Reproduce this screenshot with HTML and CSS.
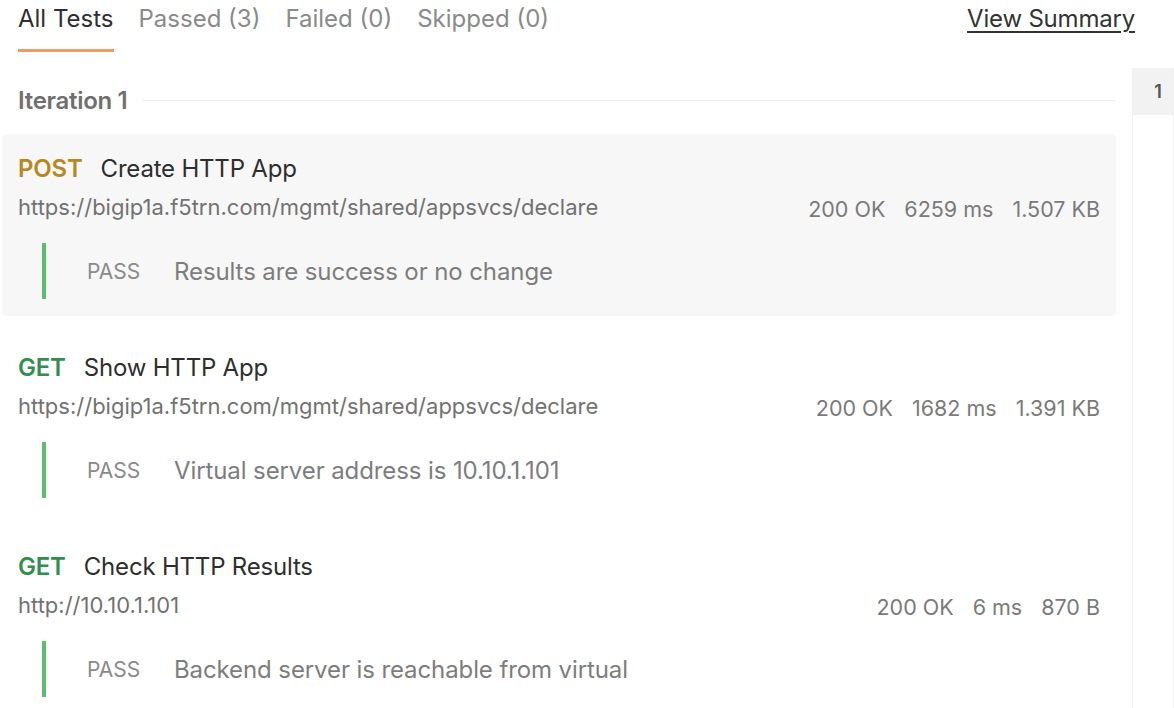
FILE: index.html
```html
<!DOCTYPE html>
<html>
<head>
<meta charset="utf-8">
<link rel="stylesheet" href="styles.css">
</head>
<body>
<div class="page">
  <div class="tabs">
    <div class="tab active">All Tests</div>
    <div class="tab">Passed (3)</div>
    <div class="tab">Failed (0)</div>
    <div class="tab">Skipped (0)</div>
    <a class="summary">View Summary</a>
  </div>
  <div class="content">
    <div class="main">
      <div class="iteration">
        <span class="iter-label">Iteration 1</span>
        <span class="iter-line"></span>
      </div>
      <div class="req hovered">
        <div class="req-top">
          <div class="req-info">
            <div class="req-title"><span class="method post">POST</span><span class="name">Create HTTP App</span></div>
            <div class="url">https://bigip1a.f5trn.com/mgmt/shared/appsvcs/declare</div>
          </div>
          <div class="stats"><span>200 OK</span><span>6259 ms</span><span>1.507 KB</span></div>
        </div>
        <div class="test"><span class="pass">PASS</span><span class="test-name">Results are success or no change</span></div>
      </div>
      <div class="req">
        <div class="req-top">
          <div class="req-info">
            <div class="req-title"><span class="method get">GET</span><span class="name">Show HTTP App</span></div>
            <div class="url">https://bigip1a.f5trn.com/mgmt/shared/appsvcs/declare</div>
          </div>
          <div class="stats"><span>200 OK</span><span>1682 ms</span><span>1.391 KB</span></div>
        </div>
        <div class="test"><span class="pass">PASS</span><span class="test-name">Virtual server address is 10.10.1.101</span></div>
      </div>
      <div class="req">
        <div class="req-top">
          <div class="req-info">
            <div class="req-title"><span class="method get">GET</span><span class="name">Check HTTP Results</span></div>
            <div class="url">http://10.10.1.101</div>
          </div>
          <div class="stats"><span>200 OK</span><span>6 ms</span><span>870 B</span></div>
        </div>
        <div class="test"><span class="pass">PASS</span><span class="test-name">Backend server is reachable from virtual</span></div>
      </div>
    </div>
    <div class="side">
      <div class="side-item">1</div>
    </div>
  </div>
</div>
</body>
</html>
```
FILE: styles.css
```css
html, body {
  margin: 0;
  padding: 0;
  background: #ffffff;
  height: 100%;
  overflow: hidden;
}
body {
  font-family: Inter, "Noto Sans", sans-serif;
  color: #3a3a3a;
}
.page {
  display: flex;
  flex-direction: column;
  height: 708px;
}
.tabs {
  display: flex;
  align-items: flex-start;
  padding: 5px 39px 0 18px;
  height: 47px;
  gap: 25px;
}
.tab {
  font-size: 24px;
  color: #8a8a8a;
  height: 44px;
  line-height: 28px;
  border-bottom: 3px solid transparent;
}
.tab.active {
  color: #2e2e2e;
  border-bottom-color: #f09a6a;
}
.summary {
  margin-left: auto;
  font-size: 24px;
  letter-spacing: -0.2px;
  line-height: 28px;
  color: #333;
  text-decoration: underline;
  text-underline-offset: 4px;
}
.content {
  flex: 1;
  display: flex;
}
.main {
  flex: 1;
  display: flex;
  flex-direction: column;
  padding-left: 2px;
}
.iteration {
  display: flex;
  align-items: center;
  gap: 16px;
  margin: 35px 0 0 16px;
  width: 1098px;
  height: 26px;
}
.iter-label {
  font-size: 24px;
  font-weight: 600;
  letter-spacing: -0.3px;
  color: #6f6f6f;
}
.iter-line {
  flex: 1;
  height: 1px;
  background: #ececec;
}
.req {
  width: 1114px;
  box-sizing: border-box;
  padding: 20px 16px 0 16px;
  height: 182px;
  margin-bottom: 17px;
  border-radius: 4px;
}
.req.hovered {
  background: #f7f7f7;
  margin-top: 21px;
}
.req-top {
  display: flex;
  justify-content: space-between;
  align-items: flex-end;
}
.req-title {
  display: flex;
  gap: 18px;
  font-size: 24px;
  letter-spacing: -0.2px;
  line-height: 30px;
}
.method {
  font-weight: 600;
}
.method.post { color: #b5891e; }
.method.get { color: #2f8f4e; }
.name { color: #2e2e2e; }
.url {
  font-size: 22px;
  line-height: 30px;
  margin-top: 8px;
  color: #727272;
}
.stats {
  display: flex;
  gap: 19px;
  font-size: 21.5px;
  line-height: 30px;
  color: #7a7a7a;
  margin-bottom: -2px;
}
.test {
  margin: 21px 0 0 24px;
  border-left: 4px solid #58c06c;
  height: 56px;
  display: flex;
  align-items: center;
  color: #7d7d7d;
  padding-left: 41px;
}
.pass {
  width: 87px;
  font-size: 21px;
  color: #8a8a8a;
}
.test-name {
  font-size: 24px;
  letter-spacing: -0.1px;
}
.side {
  width: 40px;
  border-left: 1px solid #f0f0f0;
  border-right: 1px solid #f0f0f0;
  margin-top: 16px;
}
.side-item {
  height: 47px;
  background: #f2f2f2;
  display: flex;
  align-items: center;
  justify-content: center;
  padding-left: 10px;
  font-size: 18px;
  font-weight: 600;
  color: #555;
}
```
